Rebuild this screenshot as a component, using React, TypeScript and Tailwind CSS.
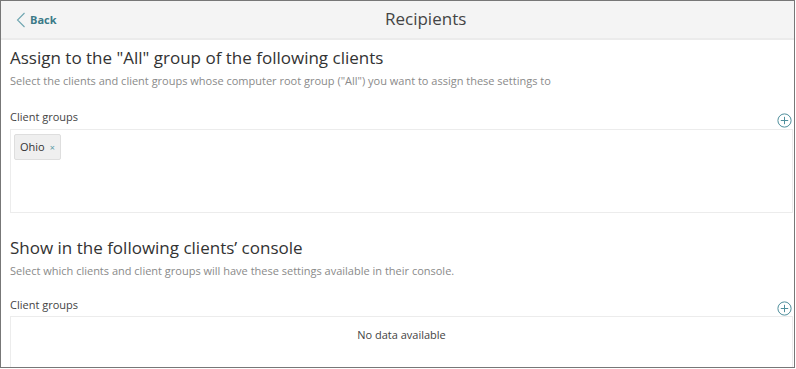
function PlusCircle() {
  return (
    <svg width="15" height="15" viewBox="0 0 15 15" fill="none" stroke="#4f8f9c" strokeWidth="1">
      <circle cx="7.5" cy="7.5" r="6.6" />
      <path d="M7.5 3.8v7.4M3.8 7.5h7.4" />
    </svg>
  );
}

function SectionHeader({ title, subtitle }: { title: string; subtitle: string }) {
  return (
    <div>
      <h2 className="text-[17px] leading-[24px] text-[#333]">{title}</h2>
      <p className="mt-[3px] text-[11px] leading-[16px] text-[#8a8a8a]">{subtitle}</p>
    </div>
  );
}

function FieldLabel() {
  return (
    <div className="flex items-start justify-between">
      <span className="text-[11px] leading-[14px] text-[#444]">Client groups</span>
      <span className="mt-[3px] mr-[1px]">
        <PlusCircle />
      </span>
    </div>
  );
}

export default function App() {
  return (
    <div className="w-[796px] h-[369px] bg-white" style={{ fontFamily: '"Open Sans", "Noto Sans", sans-serif' }}>
      <div className="w-[795px] h-[368px] border border-[#777] overflow-hidden">
        <header className="h-[39px] bg-[#f4f4f4] border-b-2 border-[#ebebeb] flex items-center relative">
          <button className="flex items-center ml-[15px] mt-[1px] text-[#3b7a88] text-[11px] font-bold">
            <svg width="10" height="16" viewBox="0 0 10 16" fill="none" stroke="#6ea5b0" strokeWidth="1.1">
              <path d="M8.5 1 1.5 8l7 7" />
            </svg>
            <span className="ml-[4px]">Back</span>
          </button>
          <h1 className="absolute left-[384px] top-[6px] text-[17px] leading-[24px] text-[#444]">Recipients</h1>
        </header>

        <div className="pl-[9px] pr-[1px]">
          <div className="pt-[6px]">
            <SectionHeader
              title={'Assign to the "All" group of the following clients'}
              subtitle={'Select the clients and client groups whose computer root group ("All") you want to assign these settings to'}
            />
          </div>
          <div className="mt-[21px]">
            <FieldLabel />
            <div className="mt-[1px] h-[84px] border border-[#ececec] p-[3px]">
              <span className="inline-flex items-center h-[26px] px-[5px] bg-[#efefef] border border-[#dedede] rounded-[2px] text-[11px] text-[#333]">
                Ohio
                <span className="ml-[5px] text-[9px] text-[#5a9aa6]">×</span>
              </span>
            </div>
          </div>

          <div className="mt-[23px]">
            <SectionHeader
              title="Show in the following clients’ console"
              subtitle="Select which clients and client groups will have these settings available in their console."
            />
          </div>
          <div className="mt-[19px]">
            <FieldLabel />
            <div className="h-[60px] border border-[#ececec] flex justify-center pt-[11px]">
              <span className="text-[11px] leading-[14px] text-[#444]">No data available</span>
            </div>
          </div>
        </div>
      </div>
    </div>
  );
}
